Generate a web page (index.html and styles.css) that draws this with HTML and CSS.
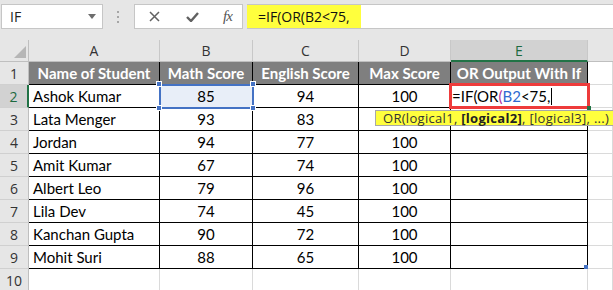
FILE: index.html
```html
<!DOCTYPE html>
<html lang="en">
<head>
    <meta charset="UTF-8">
    <title>OR Output With If</title>
    <link rel="stylesheet" href="styles.css">
</head>
<body>
    <div class="app">
        <div class="fbar">
            <div class="namebox">
                <span>IF</span>
                <svg class="drop" width="8" height="5" viewBox="0 0 8 5"><path d="M0 0h8L4 5z" fill="#6d6d6d"/></svg>
            </div>
            <div class="grip">
                <svg width="3" height="12" viewBox="0 0 3 12"><rect x="0" y="0" width="2" height="2" fill="#a6a6a6"/><rect x="0" y="5" width="2" height="2" fill="#a6a6a6"/><rect x="0" y="10" width="2" height="2" fill="#a6a6a6"/></svg>
            </div>
            <div class="btns">
                <svg width="11" height="11" viewBox="0 0 11 11"><path d="M1 1l9 9M10 1l-9 9" stroke="#616161" stroke-width="1.5" fill="none"/></svg>
                <svg width="13" height="10" viewBox="0 0 13 10"><path d="M1 5l4 4 7-8" stroke="#616161" stroke-width="2.4" fill="none"/></svg>
                <span class="fx">fx</span>
            </div>
            <div class="formula"><span class="hl">=IF(OR(B2&lt;75,</span></div>
        </div>

        <div class="sheet">
            <div class="corner"><span class="tri"></span></div>
            <div class="ch">A</div>
            <div class="ch">B</div>
            <div class="ch">C</div>
            <div class="ch">D</div>
            <div class="ch sel">E</div>
            <div class="ch last"></div>

            <div class="rh">1</div>
            <div class="c th">Name of Student</div>
            <div class="c th">Math Score</div>
            <div class="c th">English Score</div>
            <div class="c th">Max Score</div>
            <div class="c th">OR Output With If</div>
            <div class="g"></div>

            <div class="rh sel">2</div>
            <div class="c name">Ashok Kumar</div>
            <div class="c active">85
                <span class="hd tl"></span><span class="hd tr"></span><span class="hd bl"></span><span class="hd br"></span>
            </div>
            <div class="c">94</div>
            <div class="c">100</div>
            <div class="c edit">=IF(OR<span class="p">(</span><span class="ref">B2</span>&lt;75,<span class="caret"></span>
                <span class="redbox"></span>
                <span class="fill"></span>
            </div>
            <div class="g"></div>

            <div class="rh">3</div>
            <div class="c name">Lata Menger</div>
            <div class="c">93</div>
            <div class="c">83</div>
            <div class="c">
                <div class="tip">OR(logical1, <b>[logical2]</b>, [logical3], ...)</div>
            </div>
            <div class="c"></div>
            <div class="g"></div>

            <div class="rh">4</div>
            <div class="c name">Jordan</div>
            <div class="c">94</div>
            <div class="c">77</div>
            <div class="c">100</div>
            <div class="c"></div>
            <div class="g"></div>

            <div class="rh">5</div>
            <div class="c name">Amit Kumar</div>
            <div class="c">67</div>
            <div class="c">74</div>
            <div class="c">100</div>
            <div class="c"></div>
            <div class="g"></div>

            <div class="rh">6</div>
            <div class="c name">Albert Leo</div>
            <div class="c">79</div>
            <div class="c">96</div>
            <div class="c">100</div>
            <div class="c"></div>
            <div class="g"></div>

            <div class="rh">7</div>
            <div class="c name">Lila Dev</div>
            <div class="c">74</div>
            <div class="c">45</div>
            <div class="c">100</div>
            <div class="c"></div>
            <div class="g"></div>

            <div class="rh">8</div>
            <div class="c name">Kanchan Gupta</div>
            <div class="c">90</div>
            <div class="c">72</div>
            <div class="c">100</div>
            <div class="c"></div>
            <div class="g"></div>

            <div class="rh">9</div>
            <div class="c name">Mohit Suri</div>
            <div class="c">88</div>
            <div class="c">65</div>
            <div class="c">100</div>
            <div class="c corner-mark"><span class="mark"></span></div>
            <div class="g"></div>

            <div class="rh">10</div>
            <div class="g"></div>
            <div class="g"></div>
            <div class="g"></div>
            <div class="g"></div>
            <div class="g"></div>
            <div class="g"></div>
        </div>
    </div>
</body>
</html>
```

FILE: styles.css
```css
* {
    box-sizing: border-box;
}
body {
    margin: 0;
    background-color: #e6e6e6;
    font-family: Lato, 'Open Sans', sans-serif;
    overflow: hidden;
}
.app {
    width: 613px;
    height: 290px;
}
.fbar {
    display: flex;
    align-items: stretch;
    height: 40px;
    padding-top: 4px;
    padding-bottom: 11px;
    font-family: 'Open Sans', sans-serif;
}
.namebox {
    width: 102px;
    margin-left: 1px;
    background-color: white;
    border: 1px solid #c6c6c6;
    display: flex;
    align-items: center;
    justify-content: space-between;
    padding: 0 6px 0 8px;
    font-size: 14px;
    color: #222;
}
.grip {
    width: 31px;
    display: flex;
    align-items: center;
    justify-content: center;
    padding-right: 1px;
}
.btns {
    width: 109px;
    background-color: white;
    border: 1px solid #c6c6c6;
    display: flex;
    align-items: center;
    padding-left: 14px;
    gap: 26px;
}
.fx {
    font-family: 'Liberation Serif', serif;
    font-style: italic;
    font-size: 15px;
    color: #555;
    margin-left: -2px;
    letter-spacing: -1px;
}
.formula {
    flex: 1;
    margin-left: 4px;
    background-color: white;
    border-top: 1px solid #c6c6c6;
    border-bottom: 1px solid #c6c6c6;
    display: flex;
}
.hl {
    background-color: #ffff3d;
    width: 114px;
    padding-left: 11px;
    font-size: 14px;
    color: #111;
    display: flex;
    align-items: center;
}

.sheet {
    display: grid;
    grid-template-columns: 29px 131px 93px 106px 92px 137px 1fr;
    grid-template-rows: 22px repeat(10, 23px);
    background-color: white;
    font-size: 15px;
    color: #000;
}
.corner {
    background-color: #e6e6e6;
    border-right: 1px solid #bfbfbf;
    border-bottom: 1px solid #bfbfbf;
    position: relative;
}
.tri {
    position: absolute;
    right: 2px;
    bottom: 3px;
    width: 0;
    height: 0;
    border-left: 12px solid transparent;
    border-bottom: 12px solid #b6b6b6;
}
.ch {
    background-color: #e6e6e6;
    border-right: 1px solid #c8c8c8;
    border-bottom: 1px solid #bfbfbf;
    display: flex;
    align-items: center;
    justify-content: center;
    font-family: 'Open Sans', sans-serif;
    font-size: 14px;
    color: #333;
}
.ch.sel {
    background-color: #d2d2d2;
    border-bottom: 2px solid #217346;
    color: #1d6a3f;
}
.ch.last {
    border-right: none;
}
.rh {
    background-color: #e6e6e6;
    border-right: 1px solid #bfbfbf;
    border-bottom: 1px solid #d0d0d0;
    display: flex;
    align-items: center;
    justify-content: center;
    font-family: 'Open Sans', sans-serif;
    font-size: 14px;
    color: #333;
}
.rh.sel {
    background-color: #d2d2d2;
    border-right: 2px solid #217346;
    color: #1d6a3f;
}
.c {
    border-right: 1px solid #000;
    border-bottom: 1px solid #000;
    display: flex;
    align-items: center;
    justify-content: center;
    white-space: nowrap;
    position: relative;
}
.c.name {
    justify-content: flex-start;
    padding-left: 4px;
}
.c.th {
    background-color: #7f7f7f;
    color: white;
    font-weight: bold;
}
.g {
    border-right: 1px solid #dadada;
    border-bottom: 1px solid #dadada;
}
.c.active {
    background-color: #e8eef8;
    outline: 2px solid #4472c4;
    outline-offset: -1px;
    z-index: 2;
}
.hd {
    position: absolute;
    width: 6px;
    height: 6px;
    background-color: #4472c4;
    border: 1px solid white;
}
.hd.tl { left: -4px; top: -4px; }
.hd.tr { right: -4px; top: -4px; }
.hd.bl { left: -4px; bottom: -4px; }
.hd.br { right: -4px; bottom: -4px; }

.c.edit {
    justify-content: flex-start;
    padding-left: 1px;
    z-index: 3;
}
.p {
    color: #b4329b;
}
.ref {
    color: #2f6bd1;
}
.caret {
    display: inline-block;
    width: 1px;
    height: 17px;
    background-color: #000;
    margin-left: 1px;
}
.redbox {
    position: absolute;
    left: -2px;
    right: -3px;
    top: -2px;
    bottom: -2px;
    border: 3px solid #ee3b3b;
}
.fill {
    position: absolute;
    right: -4px;
    bottom: -3px;
    width: 4px;
    height: 4px;
    background-color: #217346;
}
.tip {
    position: absolute;
    left: 16px;
    top: 2px;
    height: 16px;
    padding: 0 5px 0 7px;
    background-color: #ffff3d;
    border: 1px solid #a8a8a8;
    font-family: 'Open Sans', sans-serif;
    font-size: 13px;
    letter-spacing: 0.3px;
    line-height: 14px;
    color: #333;
    white-space: nowrap;
    z-index: 4;
}
.tip b {
    color: #222;
}
.mark {
    position: absolute;
    right: -1px;
    bottom: -1px;
    width: 4px;
    height: 4px;
    background-color: #4472c4;
}
```
